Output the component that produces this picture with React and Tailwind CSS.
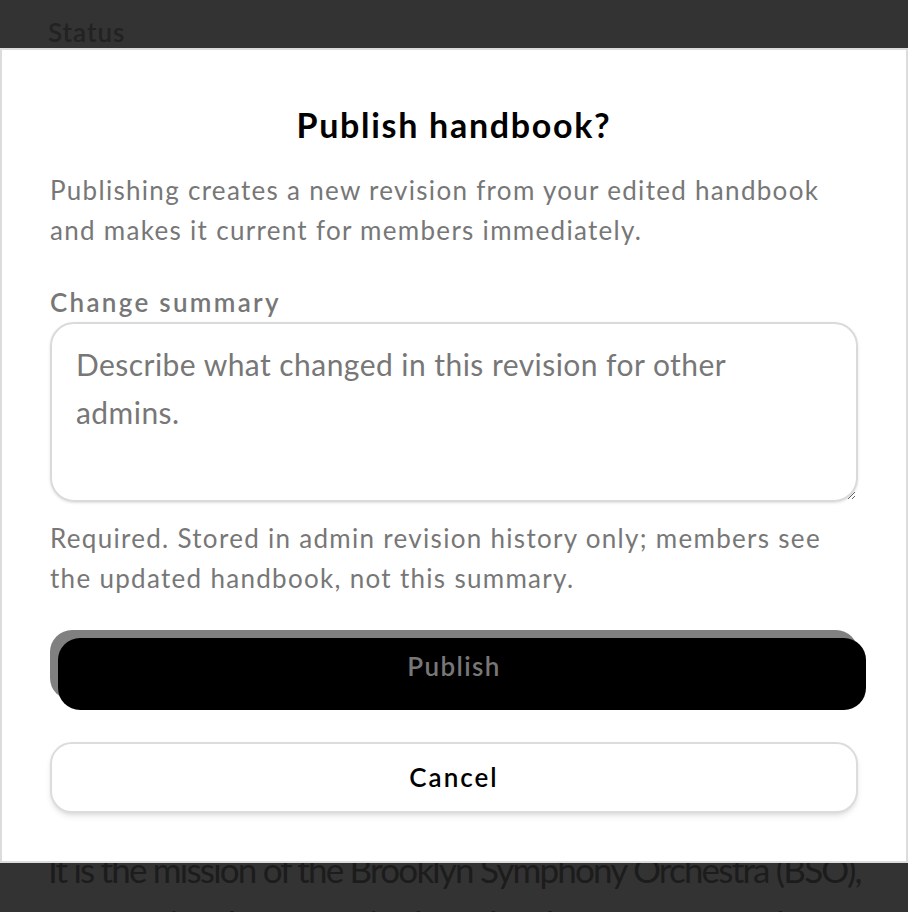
import React from "react";

export default function App() {
  return (
    <div
      className="relative w-[908px] h-[912px] overflow-hidden bg-[#333333]"
      style={{ fontFamily: "Lato, 'Noto Sans', sans-serif" }}
    >
      <div className="px-12 pt-[14px]">
        <div className="text-[26px] leading-[36px] font-semibold tracking-[1px] text-[#222]">Status</div>
        <div className="mt-[792px] text-[35px] leading-[54px] text-[#1c1c1c] tracking-[-1.8px] whitespace-nowrap">
          It is the mission of the Brooklyn Symphony Orchestra (BSO),
          <br />
          a professional, community-based orchestra, to foster the
        </div>
      </div>

      <div className="absolute left-0 top-[48px] w-[908px] h-[815px] bg-white border-2 border-[#dcdcdc] px-12 pt-[53px]">
        <h2 className="text-center text-[34px] leading-[44px] font-bold tracking-[1.7px] text-black">
          Publish handbook?
        </h2>
        <p className="mt-[23px] text-[26px] leading-[40px] tracking-[1.3px] text-[#777]">
          Publishing creates a new revision from your edited handbook and makes it current for members immediately.
        </p>
        <div className="mt-[34px] text-[26px] leading-[36px] font-semibold tracking-[2.3px] text-[#777]">
          Change summary
        </div>
        <textarea
          className="mt-[2px] block w-full h-[180px] rounded-[24px] border-2 border-[#dadada] shadow-sm pl-6 pr-12 py-4 text-[30px] leading-[48px] tracking-[0.45px] text-[#333] placeholder:text-[#777] outline-none"
          placeholder="Describe what changed in this revision for other admins."
        />
        <p className="mt-4 text-[26px] leading-[40px] tracking-[1.3px] text-[#777]">
          Required. Stored in admin revision history only; members see the updated handbook, not this summary.
        </p>
        <div className="relative mt-8 h-[70px] rounded-[22px] bg-[#808080]">
          <div className="absolute left-[8px] top-[8px] w-full h-[72px] rounded-[22px] bg-black" />
          <div className="relative flex h-full items-center justify-center pt-[3px] text-[26px] font-semibold tracking-[1.4px] text-[#777]">
            Publish
          </div>
        </div>
        <button className="mt-[42px] flex w-full h-[71px] items-center justify-center rounded-[22px] border-2 border-[#dcdcdc] bg-white shadow-md text-[26px] font-semibold tracking-[2px] text-black">
          Cancel
        </button>
      </div>
    </div>
  );
}
